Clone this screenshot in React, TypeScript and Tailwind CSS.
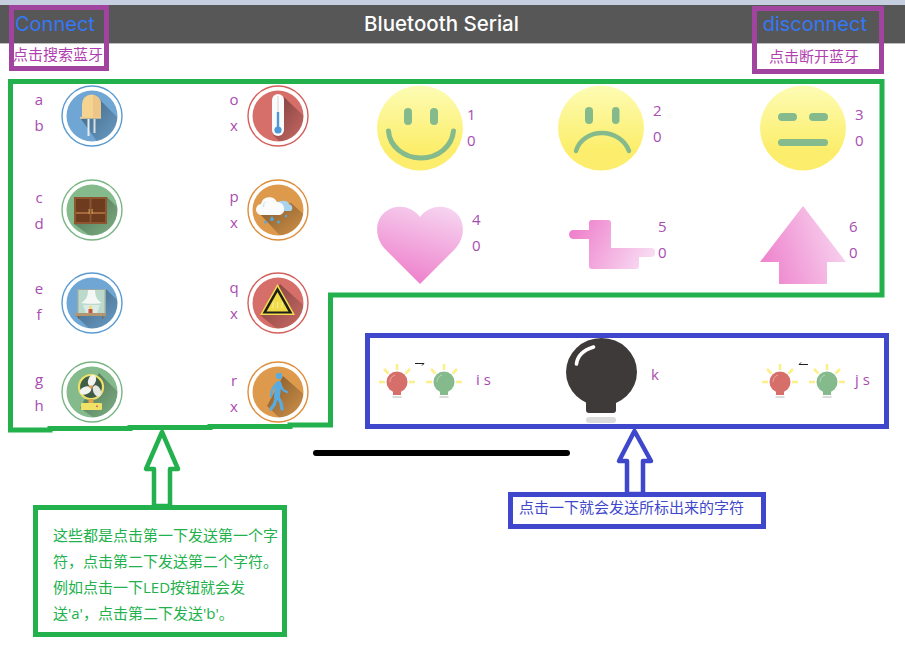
import { ReactNode } from "react";

const GREEN = "#22b14c";
const BLUE = "#3f48cc";
const FACE_GREEN = "#85bb8c";

function Pair({ top, bottom, className = "" }: { top: string; bottom: string; className?: string }) {
  return (
    <div className={`flex flex-col items-center text-[15px] leading-[26px] text-[#a84db0] ${className}`}>
      <span>{top}</span>
      <span>{bottom}</span>
    </div>
  );
}

interface RoundProps {
  id: string;
  fill: string;
  ring: string;
  shadow: string;
  children: ReactNode;
}

// flat round icon with a long shadow going to the lower right
function Round({ id, fill, ring, shadow, children }: RoundProps) {
  return (
    <svg width="62" height="62" viewBox="0 0 62 62" className="shrink-0">
      <defs>
        <clipPath id={`${id}-clip`}>
          <circle cx="31" cy="31" r="25.5" />
        </clipPath>
        <linearGradient id={`${id}-shade`} x1="0.2" y1="0.2" x2="1" y2="1">
          <stop offset="0" stopColor="#000" stopOpacity="0.34" />
          <stop offset="1" stopColor="#000" stopOpacity="0" />
        </linearGradient>
      </defs>
      <circle cx="31" cy="31" r="30" fill="#fff" stroke={ring} strokeWidth="1.4" />
      <circle cx="31" cy="31" r="25.5" fill={fill} />
      <polygon points={shadow} fill={`url(#${id}-shade)`} clipPath={`url(#${id}-clip)`} />
      {children}
    </svg>
  );
}

const LedIcon = () => (
  <Round id="led" fill="#6fa6d3" ring="#5b9bd0" shadow="34,10 62,38 62,62 40,62 20,34 39,33">
    <path d="M21 33V19a9.5 9.5 0 0 1 19 0v14z" fill="#f5d391" />
    <path d="M32 10a9.5 9.5 0 0 1 8 9v14h-8z" fill="#ecc587" />
    <rect x="19" y="32" width="21" height="1.6" fill="#f3cf8c" />
    <rect x="26.5" y="34" width="2" height="17" fill="#e8eef2" />
    <rect x="32.5" y="34" width="2" height="14" fill="#d5dfe6" />
  </Round>
);

const ThermoIcon = () => (
  <Round id="thermo" fill="#d66f6a" ring="#d4605c" shadow="37,12 62,36 62,62 38,62 26,50">
    <rect x="25" y="9" width="12" height="42" rx="6" fill="#fbfbfb" />
    <rect x="30.4" y="11" width="1.2" height="16" fill="#d9d9d9" />
    <rect x="29.8" y="27" width="2.4" height="17" fill="#4b9ad6" />
    <circle cx="31" cy="45" r="3.6" fill="#4b9ad6" />
  </Round>
);

const CupboardIcon = () => (
  <Round id="cup" fill="#85bb8c" ring="#7ab585" shadow="46,18 62,34 62,62 36,62 13,45">
    <rect x="13" y="18" width="33" height="27" fill="#8d5530" />
    <rect x="15" y="20" width="13.5" height="23" fill="#6d3b1d" />
    <rect x="30.5" y="20" width="13.5" height="23" fill="#6d3b1d" />
    <rect x="15" y="33" width="13.5" height="2" fill="#a56a3c" />
    <rect x="30.5" y="33" width="13.5" height="2" fill="#a56a3c" />
    <rect x="27.6" y="30" width="1" height="5" fill="#d6a55a" />
    <rect x="30.6" y="30" width="1" height="5" fill="#d6a55a" />
  </Round>
);

const CloudIcon = () => (
  <Round id="cloud" fill="#de9a4c" ring="#dd8e3c" shadow="44,24 62,40 62,62 38,62 12,34">
    <path d="M33 32a5 5 0 0 1 2-10 6 6 0 0 1 7 3 4 4 0 0 1 2 7z" fill="#a9d3ee" />
    <path d="M15 36a5.5 5.5 0 0 1-1-11 8.5 8.5 0 0 1 16-2 6.5 6.5 0 0 1 7 6.500 5.500 5.500 0 0 1-4 6.500z" fill="#fbfbfb" />
    <path d="M15.500 28a6 6 0 0 1 5-6 5 5 0 0 0-3 6z" fill="#cfe6f5" />
    <path d="M25 37l2 3a2 2 0 1 1-4 0z" fill="#55a9e0" />
    <circle cx="18.500" cy="43" r="1.500" fill="#55a9e0" />
    <circle cx="31.500" cy="43" r="1.500" fill="#55a9e0" />
    <circle cx="39" cy="37" r="1.200" fill="#55a9e0" />
  </Round>
);

const WindowIcon = () => (
  <Round id="win" fill="#6fa6d3" ring="#5b9bd0" shadow="45,17 62,34 62,62 34,62 14,43">
    <rect x="16" y="17" width="29" height="25" fill="#9aa9a6" />
    <rect x="17.500" y="18" width="26" height="23" fill="#bcdacb" />
    <path d="M27 18h7c0 7 3 11 7 13-3 1-16 1-21 0 4-2 7-6 7-13z" fill="#f4f7f6" />
    <path d="M22 33h17l-3 8h-11z" fill="#dcebe8" />
    <rect x="14" y="41" width="31" height="3" fill="#b39670" />
    <rect x="17" y="44" width="1.200" height="3" fill="#7d6649" />
    <rect x="41" y="44" width="1.200" height="3" fill="#7d6649" />
    <rect x="27.500" y="37" width="4" height="4" fill="#c4553f" />
    <circle cx="29.500" cy="35.500" r="1.400" fill="#f2dc4f" />
  </Round>
);

const WarnIcon = () => (
  <Round id="warn" fill="#d66f6a" ring="#d4605c" shadow="33,12 62,38 62,62 36,62 13,43">
    <polygon points="30.500,12 48,43 13,43" fill="#f4e04d" />
    <polygon points="30.500,15 45.500,41.500 15.500,41.500" fill="#1d1d1b" />
    <polygon points="30.500,20 41.500,39.500 19.500,39.500" fill="#f0dc48" />
    <path d="M26 36c-1-2 1-3 0-6M30.500 36c-1-2 1-3 0-6M35 36c-1-2 1-3 0-6" fill="none" stroke="#fbf3a8" strokeWidth="0.900" />
  </Round>
);

const FanIcon = () => (
  <Round id="fan" fill="#85bb8c" ring="#7ab585" shadow="38,12 62,36 62,62 40,62 19,47">
    <circle cx="30" cy="26" r="12" fill="#3f5c47" stroke="#efe266" strokeWidth="2.200" />
    <ellipse cx="31" cy="19.500" rx="3.800" ry="6" fill="#f3f3f0" transform="rotate(20 31 19.500)" />
    <ellipse cx="24.500" cy="29.500" rx="3.800" ry="6" fill="#f3f3f0" transform="rotate(70 24.500 29.500)" />
    <ellipse cx="36" cy="30" rx="3.800" ry="6" fill="#e6e6e2" transform="rotate(-25 36 30)" />
    <circle cx="30" cy="26" r="1.800" fill="#e9a050" />
    <rect x="27.500" y="38" width="5" height="4" fill="#e3a64c" />
    <rect x="20" y="42" width="21" height="7" rx="1" fill="#efe266" />
    <rect x="35" y="44.500" width="2" height="1.600" fill="#d9705e" />
  </Round>
);

const WalkerIcon = () => (
  <Round id="walk" fill="#de9a4c" ring="#dd8e3c" shadow="36,15 62,38 62,62 38,62 20,45">
    <circle cx="32" cy="15" r="3.200" fill="#5aabdf" />
    <g fill="none" stroke="#5aabdf" strokeLinecap="round" strokeLinejoin="round">
      <path d="M31.500 23L30 35" strokeWidth="6" />
      <path d="M29 23l-4 6-1 6M33 23l3 6 4 2" strokeWidth="2.400" />
      <path d="M29.500 36l-2 7-3.500 5M31 36l3 6 1 6" strokeWidth="3.400" />
    </g>
  </Round>
);

function FaceDisc({ id, children }: { id: string; children: ReactNode }) {
  return (
    <svg width="86" height="86" viewBox="0 0 86 86" className="shrink-0">
      <defs>
        <linearGradient id={id} x1="0" y1="0" x2="0" y2="1">
          <stop offset="0" stopColor="#fdfcb4" />
          <stop offset="0.75" stopColor="#fcee6c" />
        </linearGradient>
      </defs>
      <ellipse cx="43" cy="43" rx="43" ry="42.500" fill={`url(#${id})`} />
      {children}
    </svg>
  );
}

const Smile = () => (
  <FaceDisc id="smile">
    <rect x="27" y="23" width="8" height="17" rx="4" fill={FACE_GREEN} />
    <rect x="53" y="23" width="8" height="17" rx="4" fill={FACE_GREEN} />
    <path d="M11.500 46c1 15 15 27 32.500 27s31-12 32.500-27" fill="none" stroke={FACE_GREEN} strokeWidth="5" strokeLinecap="round" />
  </FaceDisc>
);

const Frown = () => (
  <FaceDisc id="frown">
    <rect x="27" y="22" width="8" height="17" rx="4" fill={FACE_GREEN} />
    <rect x="54" y="22" width="7.500" height="17" rx="3.700" fill={FACE_GREEN} />
    <path d="M18 66c3-11 14-18 26-18s23 7 27 18" fill="none" stroke={FACE_GREEN} strokeWidth="4.500" strokeLinecap="round" />
  </FaceDisc>
);

const Flat = () => (
  <FaceDisc id="flat">
    <rect x="18" y="28" width="19" height="8" rx="4" fill={FACE_GREEN} />
    <rect x="49" y="28" width="19" height="8" rx="4" fill={FACE_GREEN} />
    <rect x="18" y="54" width="50" height="7" rx="3.500" fill={FACE_GREEN} />
  </FaceDisc>
);

const Heart = () => (
  <svg width="86" height="79" viewBox="0 0 86 79" className="mt-px shrink-0">
    <defs>
      <linearGradient id="heart" x1="0.750" y1="0" x2="0.400" y2="1">
        <stop offset="0" stopColor="#f6d3f0" />
        <stop offset="1" stopColor="#ee7fcb" />
      </linearGradient>
    </defs>
    <path d="M43 78L8 43C-3 31-2 14 8 6c10-8 26-7 35 5 9-12 25-13 35-5 10 8 11 25 0 37z" fill="url(#heart)" />
  </svg>
);

const Hand = () => (
  <svg width="86" height="49" viewBox="0 0 86 49" className="ml-[11px] mt-[15px] shrink-0">
    <defs>
      <linearGradient id="hand" x1="0" y1="0.300" x2="1" y2="0.600">
        <stop offset="0" stopColor="#ee7fcb" />
        <stop offset="1" stopColor="#f8dcf3" />
      </linearGradient>
    </defs>
    <path d="M22 0h17a3 3 0 0 1 3 3v25h40a4.500 4.500 0 0 1 0 9H70v9a3 3 0 0 1-3 3H23a3 3 0 0 1-3-3V19H4.500a4.500 4.500 0 0 1 0-9H20V3a3 3 0 0 1 2-3z" fill="url(#hand)" />
  </svg>
);

const UpArrow = () => (
  <svg width="86" height="78" viewBox="0 0 86 78" className="mt-px shrink-0">
    <defs>
      <linearGradient id="uparrow" x1="0" y1="0.800" x2="1" y2="0.500">
        <stop offset="0" stopColor="#ee7fcb" />
        <stop offset="1" stopColor="#f7d3ef" />
      </linearGradient>
    </defs>
    <path d="M43 0l43 56H67v22H19V56H0z" fill="url(#uparrow)" />
  </svg>
);

function Light({ color }: { color: string }) {
  return (
    <svg width="40" height="40" viewBox="0 0 40 40" className="shrink-0">
      <path d="M2 20h6M32 20h6M20 2v6M7 7l4.500 4.500M33 7l-4.500 4.500" fill="none" stroke="#fbf08a" strokeWidth="2.600" />
      <rect x="16" y="28" width="8" height="5" fill={color} />
      <rect x="15.500" y="34" width="9" height="2" fill="#dcdcdc" />
      <circle cx="20" cy="20" r="10.500" fill={color} />
      <path d="M13 20a7.500 7.500 0 0 1 5-7" fill="none" stroke="#fff" strokeOpacity="0.500" strokeWidth="0.800" />
    </svg>
  );
}

function LightPair({ reverse }: { reverse?: boolean }) {
  return (
    <div className="relative flex gap-[7px]">
      <Light color="#d66f6a" />
      <Light color="#85bb8c" />
      {/* the tiny arrow over the two lamps */}
      <svg width="10" height="5" viewBox="0 0 10 5" className="absolute left-[38px] top-0">
        {reverse ? (
          <path d="M10 2.500H1l2-2" fill="none" stroke="#222" strokeWidth="1" />
        ) : (
          <path d="M0 1.500h9l-2 2" fill="none" stroke="#222" strokeWidth="1" />
        )}
      </svg>
    </div>
  );
}

const BigBulb = () => (
  <svg width="71" height="86" viewBox="0 0 71 86" className="shrink-0">
    <ellipse cx="35.500" cy="34" rx="35.500" ry="34" fill="#3e3a39" />
    <path d="M20 58h30v14a3 3 0 0 1-3 3H23a3 3 0 0 1-3-3z" fill="#3e3a39" />
    <rect x="20" y="79" width="30" height="6" rx="3" fill="#dcdcdc" />
    <path d="M10.500 26c1-8 7-14 17-17" fill="none" stroke="#fff" strokeWidth="3.600" strokeLinecap="round" />
  </svg>
);

const leftCells = [
  { top: "a", bottom: "b", icon: <LedIcon />, pad: "mt-[1px] mr-[13px]" },
  { top: "o", bottom: "x", icon: <ThermoIcon />, pad: "mt-[1px] mr-[4px]" },
  { top: "c", bottom: "d", icon: <CupboardIcon />, pad: "mt-[5px] mr-[13px]" },
  { top: "p", bottom: "x", icon: <CloudIcon />, pad: "mt-[4px] mr-[4px]" },
  { top: "e", bottom: "f", icon: <WindowIcon />, pad: "mt-[3px] mr-[13px]" },
  { top: "q", bottom: "x", icon: <WarnIcon />, pad: "mt-[2px] mr-[4px]" },
  { top: "g", bottom: "h", icon: <FanIcon />, pad: "mt-[5px] mr-[13px]" },
  { top: "r", bottom: "x", icon: <WalkerIcon />, pad: "mt-[6px] mr-[4px]" },
];

export default function App() {
  return (
    <div className="relative h-[646px] w-[905px] overflow-hidden bg-white font-['Open_Sans','Noto_Sans_CJK_SC',sans-serif]">
      <div className="h-[5px] bg-[#c5cfe0]" />
      <header className="relative flex h-[39px] items-center justify-between border-b border-[#bdbdbd] bg-[#575757] pl-[15px] pr-[38px] font-['Inter','Noto_Sans_CJK_SC',sans-serif]">
        <span className="text-[20px] text-[#3478f6]">Connect</span>
        <span className="absolute inset-x-0 ml-[-22px] text-center text-[20.5px] font-medium text-white">Bluetooth Serial</span>
        <span className="text-[20px] text-[#3478f6]">disconnect</span>
      </header>

      <div className="flex h-[41px] justify-between pl-[13px] pr-[46px] text-[15px] leading-[20px] text-[#b040b0]">
        <span>点击搜索蓝牙</span>
        <span className="mt-[2px]">点击断开蓝牙</span>
      </div>

      <main className="flex">
        <section className="grid w-[377px] grid-cols-[195px_1fr] grid-rows-[94px_93px_89px_62px] pl-[30px]">
          {leftCells.map((c) => (
            <div key={c.top + c.bottom + c.pad} className="flex items-start">
              <Pair top={c.top} bottom={c.bottom} className={`w-[18px] ${c.pad}`} />
              {c.icon}
            </div>
          ))}
        </section>

        <section className="flex flex-col">
          <div className="grid grid-cols-[181px_202px_1fr] grid-rows-[120px_81px]">
            <div className="flex items-start">
              <Smile />
              <Pair top="1" bottom="0" className="ml-[4px] mt-[16px]" />
            </div>
            <div className="flex items-start">
              <Frown />
              <Pair top="2" bottom="0" className="ml-[9px] mt-[12px]" />
            </div>
            <div className="flex items-start">
              <Flat />
              <Pair top="3" bottom="0" className="ml-[9px] mt-[16px]" />
            </div>
            <div className="flex items-start">
              <Heart />
              <Pair top="4" bottom="0" className="ml-[9px] mt-[1px]" />
            </div>
            <div className="flex items-start">
              <Hand />
              <Pair top="5" bottom="0" className="ml-[3px] mt-[8px]" />
            </div>
            <div className="flex items-start">
              <UpArrow />
              <Pair top="6" bottom="0" className="ml-[3px] mt-[8px]" />
            </div>
          </div>

          <div className="mt-[52px] flex items-start">
            <div className="mt-[24px] flex w-[189px] items-start">
              <LightPair />
              <span className="ml-[12px] mt-[6px] text-[15px] text-[#a84db0]">i s</span>
            </div>
            <BigBulb />
            <span className="ml-[14px] mt-[25px] w-[109px] text-[15px] text-[#a84db0]">k</span>
            <div className="mt-[24px] flex items-start">
              <LightPair reverse />
              <span className="ml-[8px] mt-[6px] text-[15px] text-[#a84db0]">j s</span>
            </div>
          </div>
        </section>
      </main>

      {/* annotations drawn on top of the screenshot */}
      <div className="absolute left-[9px] top-[5px] h-[66px] w-[100px] border-[5px] border-[#a0449f]" />
      <div className="absolute left-[752px] top-[6px] h-[68px] w-[132px] border-[5px] border-[#a0449f]" />
      <div className="absolute left-[365px] top-[333px] h-[96px] w-[524px] border-[5px] border-[#3f48cc]" />
      <div className="absolute left-[313px] top-[450px] h-[6px] w-[257px] rounded-full bg-black" />

      <svg width="905" height="646" viewBox="0 0 905 646" className="pointer-events-none absolute left-0 top-0">
        <path
          d="M50 430H10.500V81.500H882V295H330.500V425H290V426.500H210V427.500H130V428.500H50z"
          fill="none"
          stroke={GREEN}
          strokeWidth="5"
        />
        <path d="M162 432L146 469H154V506H170V469H178z" fill="#fff" stroke={GREEN} strokeWidth="4.500" strokeLinejoin="round" />
        <path d="M634.500 431L619 461H627V494H643V461H651z" fill="#fff" stroke={BLUE} strokeWidth="4.500" strokeLinejoin="round" />
      </svg>

      <div className="absolute left-[33px] top-[505px] h-[132px] w-[254px] border-[5px] border-[#22b14c] pl-[15px] pt-[12px] text-[15px] leading-[26px] text-[#22b14c]">
        这些都是点击第一下发送第一个字
        <br />
        符，点击第二下发送第二个字符。
        <br />
        例如点击一下LED按钮就会发
        <br />
        送'a'，点击第二下发送'b'。
      </div>
      <div className="absolute left-[508px] top-[492px] h-[37px] w-[258px] border-[5px] border-[#3f48cc] pl-[6px] text-[15px] leading-[20px] text-[#3f48cc]">
        点击一下就会发送所标出来的字符
      </div>
    </div>
  );
}
